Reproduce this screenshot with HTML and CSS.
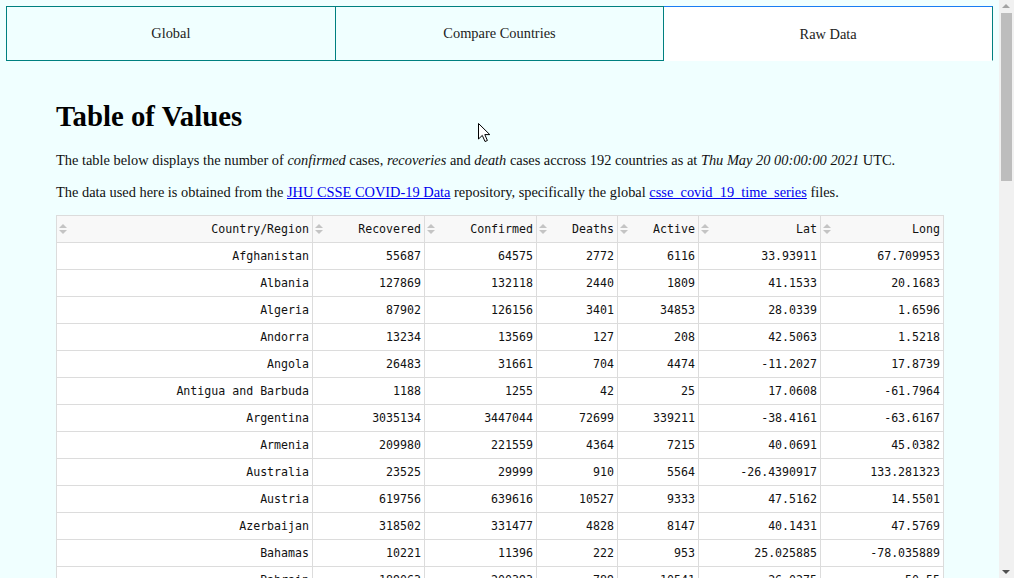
FILE: index.html
```html
<!DOCTYPE html>
<html lang="en">
<head>
<meta charset="utf-8">
<title>Raw Data</title>
<link rel="stylesheet" href="styles.css">
</head>
<body>
<nav class="tabs">
  <div class="tab">Global</div>
  <div class="tab">Compare Countries</div>
  <div class="tab active">Raw Data</div>
</nav>
<main class="content">
  <h1 class="title">Table of Values</h1>
  <p class="lead">The table below displays the number of <em>confirmed</em> cases, <em>recoveries</em> and <em>death</em> cases accross 192 countries as at <em>Thu May 20 00:00:00 2021</em> UTC.</p>
  <p class="lead">The data used here is obtained from the <a href="#">JHU CSSE COVID-19 Data</a> repository, specifically the global <a href="#">csse_covid_19_time_series</a> files.</p>
  <div class="dt-wrapper">
    <table class="dt">
      <colgroup>
        <col class="w1"><col class="w2"><col class="w2"><col class="w3"><col class="w3"><col class="w4"><col class="w5">
      </colgroup>
      <thead>
        <tr>
          <th><span class="sort"></span>Country/Region</th>
          <th><span class="sort"></span>Recovered</th>
          <th><span class="sort"></span>Confirmed</th>
          <th><span class="sort"></span>Deaths</th>
          <th><span class="sort"></span>Active</th>
          <th><span class="sort"></span>Lat</th>
          <th><span class="sort"></span>Long</th>
        </tr>
      </thead>
      <tbody>
        <tr><td>Afghanistan</td><td>55687</td><td>64575</td><td>2772</td><td>6116</td><td>33.93911</td><td>67.709953</td></tr>
        <tr><td>Albania</td><td>127869</td><td>132118</td><td>2440</td><td>1809</td><td>41.1533</td><td>20.1683</td></tr>
        <tr><td>Algeria</td><td>87902</td><td>126156</td><td>3401</td><td>34853</td><td>28.0339</td><td>1.6596</td></tr>
        <tr><td>Andorra</td><td>13234</td><td>13569</td><td>127</td><td>208</td><td>42.5063</td><td>1.5218</td></tr>
        <tr><td>Angola</td><td>26483</td><td>31661</td><td>704</td><td>4474</td><td>-11.2027</td><td>17.8739</td></tr>
        <tr><td>Antigua and Barbuda</td><td>1188</td><td>1255</td><td>42</td><td>25</td><td>17.0608</td><td>-61.7964</td></tr>
        <tr><td>Argentina</td><td>3035134</td><td>3447044</td><td>72699</td><td>339211</td><td>-38.4161</td><td>-63.6167</td></tr>
        <tr><td>Armenia</td><td>209980</td><td>221559</td><td>4364</td><td>7215</td><td>40.0691</td><td>45.0382</td></tr>
        <tr><td>Australia</td><td>23525</td><td>29999</td><td>910</td><td>5564</td><td>-26.4390917</td><td>133.281323</td></tr>
        <tr><td>Austria</td><td>619756</td><td>639616</td><td>10527</td><td>9333</td><td>47.5162</td><td>14.5501</td></tr>
        <tr><td>Azerbaijan</td><td>318502</td><td>331477</td><td>4828</td><td>8147</td><td>40.1431</td><td>47.5769</td></tr>
        <tr><td>Bahamas</td><td>10221</td><td>11396</td><td>222</td><td>953</td><td>25.025885</td><td>-78.035889</td></tr>
        <tr><td>Bahrain</td><td>189063</td><td>200393</td><td>789</td><td>10541</td><td>26.0275</td><td>50.55</td></tr>
        <tr><td>Bangladesh</td><td>733400</td><td>786698</td><td>12348</td><td>40950</td><td>23.685</td><td>90.3563</td></tr>
        <tr><td>Barbados</td><td>3833</td><td>3980</td><td>47</td><td>100</td><td>13.1939</td><td>-59.5432</td></tr>
        <tr><td>Belarus</td><td>367548</td><td>375543</td><td>2706</td><td>5289</td><td>53.7098</td><td>27.9534</td></tr>
        <tr><td>Belgium</td><td>0</td><td>1054335</td><td>24799</td><td>1029536</td><td>50.8333</td><td>4.469936</td></tr>
        <tr><td>Belize</td><td>12390</td><td>12836</td><td>322</td><td>124</td><td>17.1899</td><td>-88.4976</td></tr>
        <tr><td>Benin</td><td>7775</td><td>7967</td><td>101</td><td>91</td><td>9.3077</td><td>2.3158</td></tr>
        <tr><td>Bhutan</td><td>1422</td><td>1683</td><td>1</td><td>260</td><td>27.5142</td><td>90.4336</td></tr>
        <tr><td>Bolivia</td><td>284311</td><td>337436</td><td>13601</td><td>39524</td><td>-16.2902</td><td>-63.5887</td></tr>
        <tr><td>Bosnia and Herzegovina</td><td>173069</td><td>201905</td><td>9179</td><td>19657</td><td>43.9159</td><td>17.6791</td></tr>
        <tr><td>Botswana</td><td>48620</td><td>50917</td><td>763</td><td>1534</td><td>-22.3285</td><td>24.6849</td></tr>
        <tr><td>Brazil</td><td>14303316</td><td>15812055</td><td>441691</td><td>1067048</td><td>-14.235</td><td>-51.9253</td></tr>
        <tr><td>Brunei</td><td>225</td><td>238</td><td>3</td><td>10</td><td>4.5353</td><td>114.7277</td></tr>
        <tr><td>Bulgaria</td><td>369564</td><td>414002</td><td>17264</td><td>27174</td><td>42.7339</td><td>25.4858</td></tr>
        <tr><td>Burkina Faso</td><td>13227</td><td>13415</td><td>165</td><td>23</td><td>12.2383</td><td>-1.5616</td></tr>
        <tr><td>Burma</td><td>132255</td><td>143193</td><td>3215</td><td>7723</td><td>21.9162</td><td>95.956</td></tr>
        <tr><td>Burundi</td><td>773</td><td>4211</td><td>6</td><td>3432</td><td>-3.3731</td><td>29.9189</td></tr>
        <tr><td>Cabo Verde</td><td>26046</td><td>29134</td><td>259</td><td>2829</td><td>16.5388</td><td>-23.0418</td></tr>
        <tr><td>Cambodia</td><td>15307</td><td>24947</td><td>171</td><td>9469</td><td>11.55</td><td>104.9167</td></tr>
        <tr><td>Cameroon</td><td>75967</td><td>77716</td><td>1211</td><td>538</td><td>3.848</td><td>11.5021</td></tr>
        <tr><td>Canada</td><td>1249345</td><td>1353652</td><td>25225</td><td>79082</td><td>56.1304</td><td>-106.3468</td></tr>
        <tr><td>Central African Republic</td><td>5112</td><td>6866</td><td>94</td><td>1660</td><td>6.6111</td><td>20.9394</td></tr>
        <tr><td>Chad</td><td>4747</td><td>4934</td><td>173</td><td>14</td><td>15.4542</td><td>18.7322</td></tr>
        <tr><td>Chile</td><td>1193428</td><td>1288452</td><td>27519</td><td>67505</td><td>-35.6751</td><td>-71.543</td></tr>
        <tr><td>China</td><td>97537</td><td>102870</td><td>4846</td><td>487</td><td>30.5928</td><td>114.3055</td></tr>
        <tr><td>Colombia</td><td>2954436</td><td>3161126</td><td>82743</td><td>123947</td><td>4.5709</td><td>-74.2973</td></tr>
        <tr><td>Comoros</td><td>3674</td><td>3869</td><td>146</td><td>49</td><td>-11.6455</td><td>43.3333</td></tr>
        <tr><td>Congo (Brazzaville)</td><td>10728</td><td>11349</td><td>149</td><td>472</td><td>-0.228</td><td>15.8277</td></tr>
        <tr><td>Congo (Kinshasa)</td><td>27658</td><td>30636</td><td>775</td><td>2203</td><td>-4.0383</td><td>21.7587</td></tr>
        <tr><td>Costa Rica</td><td>243338</td><td>288569</td><td>3595</td><td>41636</td><td>9.7489</td><td>-83.7534</td></tr>
        <tr><td>Cote d'Ivoire</td><td>46134</td><td>46665</td><td>294</td><td>237</td><td>7.54</td><td>-5.5471</td></tr>
        <tr><td>Croatia</td><td>335478</td><td>351495</td><td>7717</td><td>8300</td><td>45.1</td><td>15.2</td></tr>
        <tr><td>Cuba</td><td>124506</td><td>134217</td><td>865</td><td>8846</td><td>21.521757</td><td>-77.781167</td></tr>
        <tr><td>Cyprus</td><td>0</td><td>72086</td><td>357</td><td>71729</td><td>35.1264</td><td>33.4299</td></tr>
        <tr><td>Czechia</td><td>1605829</td><td>1656278</td><td>30045</td><td>20404</td><td>49.8175</td><td>15.473</td></tr>
        <tr><td>Denmark</td><td>0</td><td>266603</td><td>2499</td><td>264104</td><td>56.2639</td><td>9.5018</td></tr>
        <tr><td>Djibouti</td><td>11363</td><td>11541</td><td>152</td><td>26</td><td>11.8251</td><td>42.5903</td></tr>
        <tr><td>Dominica</td><td>176</td><td>184</td><td>0</td><td>8</td><td>15.415</td><td>-61.371</td></tr>
      </tbody>
    </table>
    <div class="dt-footer">
      <div class="dt-info">Showing 1 to 50 of 192 entries</div>
      <div class="dt-paginate">
        <span class="pg disabled">Previous</span>
        <span class="pg current">1</span>
        <span class="pg">2</span>
        <span class="pg">3</span>
        <span class="pg">4</span>
        <span class="pg">Next</span>
      </div>
    </div>
  </div>
</main>
<svg class="cursor" width="14" height="21" viewBox="0 0 14 21" aria-hidden="true">
  <path d="M1.5 1.5 L1.5 17 L5.3 13.4 L8 19.5 L10.4 18.5 L7.8 12.6 L12.8 12.6 Z" fill="#fff" stroke="#000" stroke-width="1"/>
</svg>
<div class="scrollbar" aria-hidden="true">
  <span class="sb-up"></span>
  <span class="sb-thumb"></span>
  <span class="sb-down"></span>
</div>
</body>
</html>
```
FILE: styles.css
```css
html, body {
  margin: 0;
  padding: 0;
}

body {
  background: #f0ffff;
  color: #111;
  font-family: "Liberation Serif", "Times New Roman", serif;
  font-size: 14.4px;
  padding-right: 15px;
}

.tabs {
  display: flex;
  margin: 6px 6px 0;
}

.tab {
  flex: 1 1 0;
  height: 53px;
  border: 1px solid #008080;
  border-left: none;
  display: flex;
  align-items: center;
  justify-content: center;
  color: #222;
}

.tab:first-child {
  border-left: 1px solid #008080;
}

.tab.active {
  background: #fff;
  border-top-color: #1a7cf2;
  border-bottom-color: #fff;
  padding-top: 2px;
  height: 51px;
}

.content {
  padding: 0 56px 30px;
}

.title {
  font-size: 28.8px;
  line-height: 32px;
  font-weight: bold;
  margin: 39px 0 19px;
  color: #000;
}

.lead {
  line-height: 18px;
  margin: 14px 0;
}

.lead a {
  color: #0000ee;
}

.dt-wrapper {
  margin-top: 14px;
}

.dt {
  width: 100%;
  table-layout: fixed;
  border-collapse: collapse;
  font-family: "DejaVu Sans Mono", monospace;
  font-size: 11.6px;
  color: #111;
}

.w1 { width: 256px; }
.w2 { width: 112px; }
.w3 { width: 81px; }
.w4 { width: 122px; }
.w5 { width: 123px; }

.dt th,
.dt td {
  border: 1px solid #dcdcdc;
  height: 26px;
  padding: 0 3px 0 0;
  text-align: right;
  white-space: nowrap;
  overflow: hidden;
  line-height: 26px;
}

.dt th {
  background: #f8f8f8;
  font-weight: normal;
  position: relative;
}

.dt td {
  background: #fff;
}

.sort {
  position: absolute;
  left: 2px;
  top: 8px;
  width: 9px;
  height: 10px;
}

.sort::before,
.sort::after {
  content: "";
  position: absolute;
  left: 0;
  width: 0;
  height: 0;
  border-left: 4px solid transparent;
  border-right: 4px solid transparent;
}

.sort::before {
  top: 0;
  border-bottom: 4px solid #c4c4c4;
}

.sort::after {
  top: 6px;
  border-top: 4px solid #c4c4c4;
}

.dt-footer {
  display: flex;
  justify-content: space-between;
  align-items: center;
  padding-top: 12px;
}

.dt-paginate {
  display: flex;
  gap: 4px;
}

.pg {
  padding: 4px 10px;
  border: 1px solid transparent;
  border-radius: 2px;
  color: #333;
}

.pg.current {
  border-color: #979797;
  background: #fafafa;
}

.pg.disabled {
  color: #888;
}

.cursor {
  position: absolute;
  left: 477px;
  top: 122px;
}

.scrollbar {
  position: fixed;
  top: 0;
  right: 0;
  width: 15px;
  height: 100vh;
  background: #f1f1f1;
}

.sb-up,
.sb-down {
  position: absolute;
  left: 3px;
  width: 0;
  height: 0;
  border-left: 4px solid transparent;
  border-right: 4px solid transparent;
}

.sb-up {
  top: 4px;
  border-bottom: 4px solid #a3a3a3;
}

.sb-down {
  bottom: 4px;
  border-top: 4px solid #505050;
}

.sb-thumb {
  position: absolute;
  left: 2px;
  right: 2px;
  top: 13px;
  height: 168px;
  background: #bdbdbd;
}
```
